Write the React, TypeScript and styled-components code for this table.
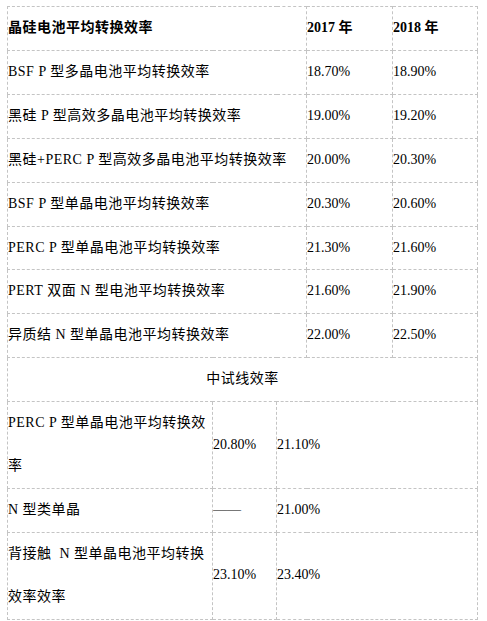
import styled, { createGlobalStyle } from "styled-components";

const GlobalStyle = createGlobalStyle`
  html, body {
    margin: 0;
    padding: 0;
    background: #fff;
  }
`;

type Row = { label: React.ReactNode; a: string; b: string };

const upperRows: Row[] = [
  { label: "BSF P 型多晶电池平均转换效率", a: "18.70%", b: "18.90%" },
  { label: "黑硅 P 型高效多晶电池平均转换效率", a: "19.00%", b: "19.20%" },
  { label: "黑硅+PERC P 型高效多晶电池平均转换效率", a: "20.00%", b: "20.30%" },
  { label: "BSF P 型单晶电池平均转换效率", a: "20.30%", b: "20.60%" },
  { label: "PERC P 型单晶电池平均转换效率", a: "21.30%", b: "21.60%" },
  { label: "PERT 双面 N 型电池平均转换效率", a: "21.60%", b: "21.90%" },
  { label: "异质结 N 型单晶电池平均转换效率", a: "22.00%", b: "22.50%" },
];

const lowerRows: Row[] = [
  {
    label: (
      <>
        PERC P 型单晶电池平均转换效
        <br />率
      </>
    ),
    a: "20.80%",
    b: "21.10%",
  },
  { label: "N 型类单晶", a: "——", b: "21.00%" },
  {
    label: (
      <>
        背接触&nbsp; N 型单晶电池平均转换
        <br />效率效率
      </>
    ),
    a: "23.10%",
    b: "23.40%",
  },
];

export default function App() {
  return (
    <>
      <GlobalStyle />
      <Page>
        <Table>
          <colgroup>
            <col style={{ width: 205 }} />
            <col style={{ width: 64 }} />
            <col style={{ width: 30 }} />
            <col style={{ width: 86 }} />
            <col style={{ width: 85 }} />
          </colgroup>
          <tbody>
            <tr>
              <Cell colSpan={3} $bold $label>
                晶硅电池平均转换效率
              </Cell>
              <Cell $bold>2017 年</Cell>
              <Cell $bold>2018 年</Cell>
            </tr>
            {upperRows.map((r, i) => (
              <tr key={i}>
                <Cell colSpan={3} $label>
                  {r.label}
                </Cell>
                <Cell>{r.a}</Cell>
                <Cell>{r.b}</Cell>
              </tr>
            ))}
            <tr>
              <Cell colSpan={5} $center $label>
                中试线效率
              </Cell>
            </tr>
            {lowerRows.map((r, i) => (
              <tr key={i}>
                <Cell $label>{r.label}</Cell>
                <Cell>{r.a}</Cell>
                <Cell colSpan={3}>{r.b}</Cell>
              </tr>
            ))}
          </tbody>
        </Table>
      </Page>
    </>
  );
}

const Page = styled.div`
  padding: 6px 0 0 7px;
`;

const Table = styled.table`
  border-collapse: collapse;
  table-layout: fixed;
  width: 471px;
  font-family: "Liberation Serif", "Noto Sans CJK SC", serif;
  font-size: 14px;
  color: #000;
`;

const Cell = styled.td<{ $bold?: boolean; $center?: boolean; $label?: boolean }>`
  border: 1px dashed #c4c4c4;
  padding: 0;
  line-height: 42.9px;
  vertical-align: middle;
  white-space: nowrap;
  overflow: hidden;
  font-weight: ${(p) => (p.$bold ? 700 : 400)};
  text-align: ${(p) => (p.$center ? "center" : "left")};
  letter-spacing: ${(p) => (p.$label ? "0.5px" : "0")};
`;
